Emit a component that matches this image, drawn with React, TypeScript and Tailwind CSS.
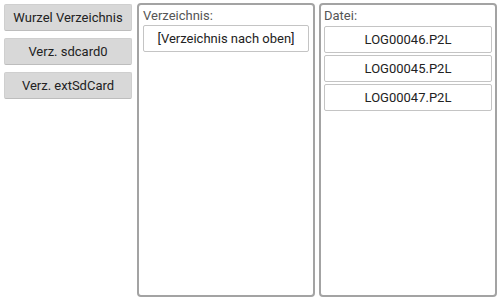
import React from "react";

const font = { fontFamily: "Roboto, 'Noto Sans', sans-serif" };

function GrayButton({ label }: { label: string }) {
  return (
    <div className="h-[27px] flex items-center justify-center bg-[#d8d8d8] border border-[#cfcfcf] border-b-[#bdbdbd] rounded-[2px] text-[13px] text-[#222]">
      {label}
    </div>
  );
}

function WhiteButton({ label }: { label: string }) {
  return (
    <div className="h-[27px] flex items-center justify-center bg-white border border-[#c4c4c4] rounded-[2px] text-[13px] text-[#222]">
      {label}
    </div>
  );
}

export default function App() {
  return (
    <div className="w-[500px] h-[300px] bg-white flex overflow-hidden" style={font}>
      <div className="w-[128px] ml-[4px] mt-[4px] flex flex-col gap-[7px]">
        <GrayButton label="Wurzel Verzeichnis" />
        <GrayButton label="Verz. sdcard0" />
        <GrayButton label="Verz. extSdCard" />
      </div>
      <div className="ml-[5px] mt-[3px] w-[178px] h-[294px] border-2 border-[#a3a3a3] rounded-[4px] px-[4px] flex flex-col">
        <div className="h-[20px] text-[13px] leading-[20px] text-[#555] pt-[1px]">Verzeichnis:</div>
        <WhiteButton label="[Verzeichnis nach oben]" />
      </div>
      <div className="ml-[4px] mt-[3px] w-[178px] h-[294px] border-2 border-[#a3a3a3] rounded-[4px] px-[3px] flex flex-col gap-[2px]">
        <div className="h-[19px] text-[13px] leading-[20px] text-[#555] pt-[1px]">Datei:</div>
        <WhiteButton label="LOG00046.P2L" />
        <WhiteButton label="LOG00045.P2L" />
        <WhiteButton label="LOG00047.P2L" />
      </div>
    </div>
  );
}
